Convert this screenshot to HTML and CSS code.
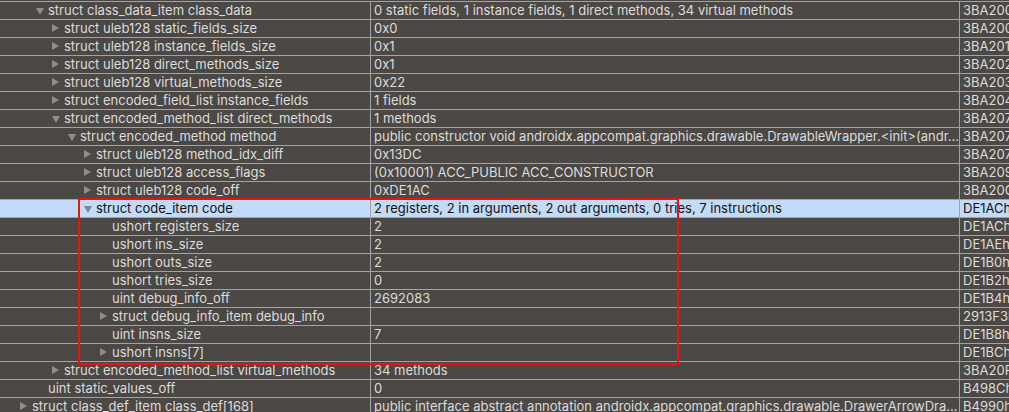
FILE: index.html
```html
<!DOCTYPE html>
<html>
<head>
<meta charset="utf-8">
<link rel="stylesheet" href="styles.css">
</head>
<body>
<div class="tree">
  <div class="row"><div class="c name l1"><span class="tw open"></span>struct class_data_item class_data</div><div class="c val">0 static fields, 1 instance fields, 1 direct methods, 34 virtual methods</div><div class="c off">3BA200h</div></div>
  <div class="row"><div class="c name l2"><span class="tw closed"></span>struct uleb128 static_fields_size</div><div class="c val">0x0</div><div class="c off">3BA200h</div></div>
  <div class="row"><div class="c name l2"><span class="tw closed"></span>struct uleb128 instance_fields_size</div><div class="c val">0x1</div><div class="c off">3BA201h</div></div>
  <div class="row"><div class="c name l2"><span class="tw closed"></span>struct uleb128 direct_methods_size</div><div class="c val">0x1</div><div class="c off">3BA202h</div></div>
  <div class="row"><div class="c name l2"><span class="tw closed"></span>struct uleb128 virtual_methods_size</div><div class="c val">0x22</div><div class="c off">3BA203h</div></div>
  <div class="row"><div class="c name l2"><span class="tw closed"></span>struct encoded_field_list instance_fields</div><div class="c val">1 fields</div><div class="c off">3BA204h</div></div>
  <div class="row"><div class="c name l2"><span class="tw open"></span>struct encoded_method_list direct_methods</div><div class="c val">1 methods</div><div class="c off">3BA207h</div></div>
  <div class="row"><div class="c name l3"><span class="tw open"></span>struct encoded_method method</div><div class="c val">public constructor void androidx.appcompat.graphics.drawable.DrawableWrapper.&lt;init&gt;(andr...</div><div class="c off">3BA207h</div></div>
  <div class="row"><div class="c name l4"><span class="tw closed"></span>struct uleb128 method_idx_diff</div><div class="c val">0x13DC</div><div class="c off">3BA207h</div></div>
  <div class="row"><div class="c name l4"><span class="tw closed"></span>struct uleb128 access_flags</div><div class="c val">(0x10001) ACC_PUBLIC ACC_CONSTRUCTOR</div><div class="c off">3BA209h</div></div>
  <div class="row"><div class="c name l4"><span class="tw closed"></span>struct uleb128 code_off</div><div class="c val">0xDE1AC</div><div class="c off">3BA20Ch</div></div>
  <div class="row sel"><div class="c name l4 focus"><span class="tw open"></span>struct code_item code</div><div class="c val">2 registers, 2 in arguments, 2 out arguments, 0 tries, 7 instructions</div><div class="c off">DE1ACh</div></div>
  <div class="row"><div class="c name l5"><span class="tw"></span>ushort registers_size</div><div class="c val">2</div><div class="c off">DE1ACh</div></div>
  <div class="row"><div class="c name l5"><span class="tw"></span>ushort ins_size</div><div class="c val">2</div><div class="c off">DE1AEh</div></div>
  <div class="row"><div class="c name l5"><span class="tw"></span>ushort outs_size</div><div class="c val">2</div><div class="c off">DE1B0h</div></div>
  <div class="row"><div class="c name l5"><span class="tw"></span>ushort tries_size</div><div class="c val">0</div><div class="c off">DE1B2h</div></div>
  <div class="row"><div class="c name l5"><span class="tw"></span>uint debug_info_off</div><div class="c val">2692083</div><div class="c off">DE1B4h</div></div>
  <div class="row"><div class="c name l5"><span class="tw closed"></span>struct debug_info_item debug_info</div><div class="c val"></div><div class="c off">2913F3h</div></div>
  <div class="row"><div class="c name l5"><span class="tw"></span>uint insns_size</div><div class="c val">7</div><div class="c off">DE1B8h</div></div>
  <div class="row"><div class="c name l5"><span class="tw closed"></span>ushort insns[7]</div><div class="c val"></div><div class="c off">DE1BCh</div></div>
  <div class="row"><div class="c name l2"><span class="tw closed"></span>struct encoded_method_list virtual_methods</div><div class="c val">34 methods</div><div class="c off">3BA20Fh</div></div>
  <div class="row"><div class="c name l1"><span class="tw"></span>uint static_values_off</div><div class="c val">0</div><div class="c off">B498Ch</div></div>
  <div class="row"><div class="c name l0"><span class="tw closed"></span>struct class_def_item class_def[168]</div><div class="c val">public interface abstract annotation androidx.appcompat.graphics.drawable.DrawerArrowDra...</div><div class="c off">B4990h</div></div>
  <div class="annot"></div>
</div>
</body>
</html>
```

FILE: styles.css
```css
html, body {
  margin: 0;
  padding: 0;
  background: #4a4744;
  overflow: hidden;
}

.tree {
  position: relative;
  padding-top: 1px;
  font-family: "Inter", "Roboto", "Liberation Sans", sans-serif;
  font-size: 13px;
  color: #dedcda;
}

.row {
  display: grid;
  grid-template-columns: 371px 589px 1fr;
  height: 17px;
  border-top: 1px solid #a3a3a3;
  background: #4a4744;
}

.row:nth-child(odd) {
  background: #4b4845;
}

.c {
  position: relative;
  line-height: 17px;
  white-space: nowrap;
  overflow: hidden;
  border-right: 1px solid #a3a3a3;
}

.off {
  border-right: none;
  padding-left: 3px;
}

.val {
  padding-left: 3px;
}

.name {
  display: flex;
  align-items: center;
}

.l0 { padding-left: 20px; }
.l1 { padding-left: 36px; }
.l2 { padding-left: 52px; }
.l3 { padding-left: 68px; }
.l4 { padding-left: 84px; }
.l5 { padding-left: 100px; }

.tw {
  flex: 0 0 12px;
  width: 12px;
  height: 17px;
  position: relative;
}

.tw.closed::before {
  content: "";
  position: absolute;
  left: 0;
  top: 4px;
  border-left: 7px solid #8f8e8c;
  border-top: 4px solid transparent;
  border-bottom: 4px solid transparent;
}

.tw.open::before {
  content: "";
  position: absolute;
  left: 0;
  top: 6px;
  border-top: 7px solid #8f8e8c;
  border-left: 4px solid transparent;
  border-right: 4px solid transparent;
}

.row.sel {
  background: #c3dbf7;
  color: #111;
}

.row.sel .tw.open::before {
  border-top-color: #7f8893;
}

.focus::after {
  content: "";
  position: absolute;
  left: 0;
  top: -1px;
  right: -1px;
  bottom: -1px;
  border: 1px dotted #2a2a2a;
  border-left: none;
}

.annot {
  position: absolute;
  left: 78px;
  top: 198px;
  width: 597px;
  height: 163px;
  border: 2px solid #e8120e;
  pointer-events: none;
}
```
